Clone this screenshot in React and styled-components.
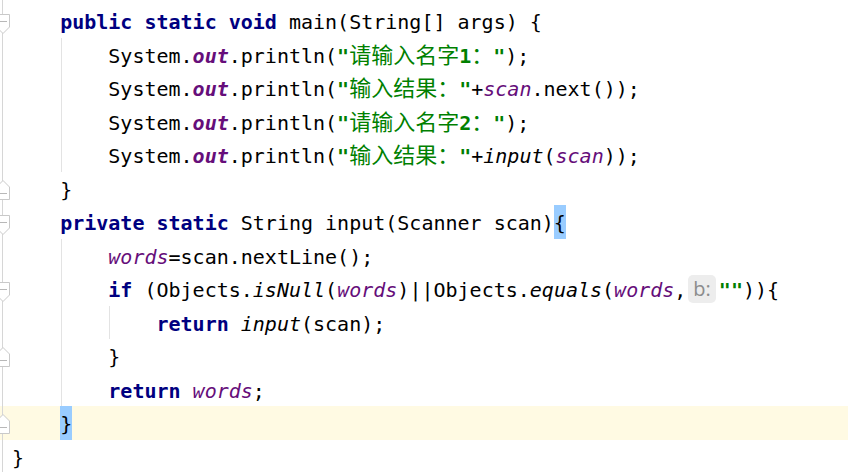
import React from "react";
import styled, { createGlobalStyle } from "styled-components";

const GlobalStyle = createGlobalStyle`
body{
    margin: 0;
    background: #fff;
    overflow: hidden;
}
`

const ROW = 33.5;
const CHAR = 12.04;

function FoldMarker({ end }) {
    if (end) {
        return (
            <Marker $end viewBox="0 0 12 20" width="12" height="20">
                <path d="M3 0.5 L9.5 7 V19.5 H-3.5 V7 Z" fill="#fff" stroke="#c9c9c9" />
                <path d="M0 13.5 H7" stroke="#b8b8b8" />
            </Marker>
        )
    }
    return (
        <Marker viewBox="0 0 12 20" width="12" height="20">
            <path d="M-3.5 0.5 H9.5 V13 L3 19.5 L-3.5 13 Z" fill="#fff" stroke="#c9c9c9" />
            <path d="M0 7.5 H7" stroke="#b8b8b8" />
        </Marker>
    )
}

function Line({ indent = 0, fold, guides = [], current, children }) {
    return (
        <Row $current={current}>
            <Gutter>{fold && <FoldMarker end={fold === "end"} />}</Gutter>
            <Code $indent={indent} $guides={guides}>{children}</Code>
        </Row>
    )
}

export default function App() {
    return (
        <Editor>
            <GlobalStyle />
            <Line indent={1} fold="start">
                <Kw>public static void</Kw> main(String[] args) {"{"}
            </Line>
            <Line indent={2} guides={[1]}>
                System.<Field $bold>out</Field>.println(<Str>"<Cjk>请输入名字</Cjk>1<Cjk>：</Cjk>"</Str>);
            </Line>
            <Line indent={2} guides={[1]}>
                System.<Field $bold>out</Field>.println(<Str>"<Cjk>输入结果：</Cjk>"</Str>+<Field>scan</Field>.next());
            </Line>
            <Line indent={2} guides={[1]}>
                System.<Field $bold>out</Field>.println(<Str>"<Cjk>请输入名字</Cjk>2<Cjk>：</Cjk>"</Str>);
            </Line>
            <Line indent={2} guides={[1]}>
                System.<Field $bold>out</Field>.println(<Str>"<Cjk>输入结果：</Cjk>"</Str>+<Call>input</Call>(<Field>scan</Field>));
            </Line>
            <Line indent={1} fold="end">
                {"}"}
            </Line>
            <Line indent={1} fold="start">
                <Kw>private static</Kw> String input(Scanner scan)<Match>{"{"}</Match>
            </Line>
            <Line indent={2} guides={[1]}>
                <Field>words</Field>=scan.nextLine();
            </Line>
            <Line indent={2} guides={[1]} fold="start">
                <Kw>if</Kw> (Objects.<Call>isNull</Call>(<Field>words</Field>)||Objects.<Call>equals</Call>(<Field>words</Field>,<Hint>b:</Hint><Str>""</Str>)){"{"}
            </Line>
            <Line indent={3} guides={[1, 2]}>
                <Kw>return</Kw> <Call>input</Call>(scan);
            </Line>
            <Line indent={2} guides={[1]} fold="end">
                {"}"}
            </Line>
            <Line indent={2} guides={[1]}>
                <Kw>return</Kw> <Field>words</Field>;
            </Line>
            <Line indent={1} fold="end" current>
                <Match>{"}"}</Match>
            </Line>
            <Line indent={0}>
                {"}"}
            </Line>
        </Editor>
    )
}

const Editor = styled.div`
width: 848px;
height: 472px;
overflow: hidden;
padding-top: 4px;
box-sizing: border-box;
background: linear-gradient(#d6d6d6, #d6d6d6) 2px 0 / 1px 100% no-repeat, #fff;
font-family: "DejaVu Sans Mono", "Noto Sans CJK SC", monospace;
font-size: 20px;
color: #000;
`
const Row = styled.div`
display: flex;
height: ${ROW}px;
background-color: ${p => p.$current ? "#fffae3" : "transparent"};
`
const Gutter = styled.div`
position: relative;
flex: 0 0 12px;
background: linear-gradient(#d6d6d6, #d6d6d6) 2px 0 / 1px 100% no-repeat;
`
const Marker = styled.svg`
position: absolute;
left: 0;
top: ${p => p.$end ? 8 : 10}px;
overflow: hidden;
`
const Code = styled.div`
flex: 1;
height: ${ROW}px;
line-height: 37.5px;
white-space: pre;
padding-left: ${p => p.$indent * 4 * CHAR}px;
background-image: ${p => p.$guides.length ? p.$guides.map(() => "linear-gradient(#e3e3e3, #e3e3e3)").join(", ") : "none"};
background-position: ${p => p.$guides.map(g => `${(g - 1) * 4 * CHAR + 49}px 0`).join(", ")};
background-size: 1px 100%;
background-repeat: no-repeat;
`
const Kw = styled.span`
color: #000080;
font-weight: bold;
`
const Str = styled.span`
color: #008000;
font-weight: bold;
`
const Field = styled.span`
color: #660e7a;
font-style: italic;
font-weight: ${p => p.$bold ? "bold" : "normal"};
`
const Call = styled.span`
font-style: italic;
`
const Cjk = styled.span`
font-family: "Noto Sans CJK SC", sans-serif;
font-size: 22px;
font-weight: normal;
line-height: 1;
`
const Match = styled.span`
display: inline-block;
vertical-align: top;
height: ${ROW}px;
background-color: #99ccff;
`
const Hint = styled.span`
display: inline-block;
vertical-align: top;
margin: 3px 3px 0 2px;
padding: 0 5px;
height: 28px;
line-height: 28px;
border-radius: 5px;
background-color: #ededed;
color: #8c8c8c;
font-family: "Open Sans", "Liberation Sans", sans-serif;
font-size: 20px;
`
